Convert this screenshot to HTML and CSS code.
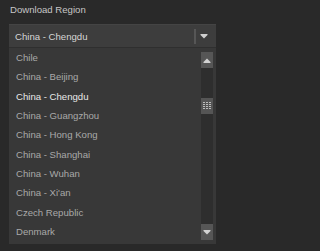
FILE: index.html
```html
<!DOCTYPE html>
<html>
<head>
<meta charset="utf-8">
<link rel="stylesheet" href="styles.css">
</head>
<body>
<div class="panel">
  <div class="label">Download Region</div>
  <div class="select">
    <span class="select-text">China - Chengdu</span>
    <span class="select-sep"></span>
    <svg class="select-arrow" width="8" height="5" viewBox="0 0 8 5"><rect x="0.5" y="0" width="7" height="1" fill="#cfcfcf"/><polygon points="0.5,1 7.5,1 4,4.5" fill="#cfcfcf"/></svg>
  </div>
  <div class="list">
    <div class="items">
      <div class="item">Chile</div>
      <div class="item">China - Beijing</div>
      <div class="item selected">China - Chengdu</div>
      <div class="item">China - Guangzhou</div>
      <div class="item">China - Hong Kong</div>
      <div class="item">China - Shanghai</div>
      <div class="item">China - Wuhan</div>
      <div class="item">China - Xi'an</div>
      <div class="item">Czech Republic</div>
      <div class="item">Denmark</div>
    </div>
    <div class="scrollbar">
      <div class="sb-btn">
        <svg width="8" height="5" viewBox="0 0 8 5"><polygon points="4,0.5 7.5,4 0.5,4" fill="#d2d2d2"/><rect x="0.5" y="4" width="7" height="1" fill="#d2d2d2"/></svg>
      </div>
      <div class="sb-track">
        <div class="sb-thumb">
          <svg width="8" height="8" viewBox="0 0 8 8">
            <g fill="#bdbdbd">
              <rect x="0" y="0" width="2" height="1"/><rect x="3" y="0" width="2" height="1"/><rect x="6" y="0" width="2" height="1"/>
              <rect x="0" y="2" width="2" height="1"/><rect x="3" y="2" width="2" height="1"/><rect x="6" y="2" width="2" height="1"/>
              <rect x="0" y="4" width="2" height="1"/><rect x="3" y="4" width="2" height="1"/><rect x="6" y="4" width="2" height="1"/>
              <rect x="0" y="6" width="2" height="1"/><rect x="3" y="6" width="2" height="1"/><rect x="6" y="6" width="2" height="1"/>
            </g>
          </svg>
        </div>
      </div>
      <div class="sb-btn">
        <svg width="8" height="5" viewBox="0 0 8 5"><rect x="0.5" y="0" width="7" height="1" fill="#d2d2d2"/><polygon points="0.5,1 7.5,1 4,4.5" fill="#d2d2d2"/></svg>
      </div>
    </div>
  </div>
</div>
</body>
</html>
```

FILE: styles.css
```css
html, body {
  margin: 0;
  padding: 0;
  background: #292929;
  font-family: "Liberation Sans", Arial, sans-serif;
  font-size: 9.6px;
}

.panel {
  padding: 0 1px 0 9px;
  width: 207px;
}

.label {
  height: 24px;
  line-height: 19px;
  padding-left: 1px;
  color: #c6c6c6;
}

.select {
  height: 23px;
  background: #3d3d3d;
  display: flex;
  align-items: center;
  padding-left: 6px;
  box-sizing: border-box;
  border-top: 1px solid #444444;
}

.select-text {
  flex: 1;
  color: #d6d6d6;
}

.select-sep {
  width: 2px;
  height: 15px;
  background: #565656;
  margin-right: 4px;
}

.select-arrow {
  display: block;
  margin-right: 8px;
}

.list {
  height: 197px;
  background: #383838;
  display: flex;
  border-top: 1px solid #2f2f2f;
  box-sizing: border-box;
}

.items {
  flex: 1;
  padding-left: 7px;
}

.item {
  height: 19.33px;
  line-height: 19.33px;
  color: #a9a9a9;
  white-space: nowrap;
}

.item.selected {
  color: #e8e8e8;
}

.scrollbar {
  width: 12px;
  margin: 4px 3px 4px 0;
  display: flex;
  flex-direction: column;
}

.sb-btn {
  height: 16px;
  background: #565656;
  display: flex;
  align-items: center;
  justify-content: center;
}

.sb-btn svg {
  display: block;
}

.sb-track {
  flex: 1;
  background: #2e2e2e;
}

.sb-thumb {
  margin-top: 30px;
  height: 16px;
  background: #555555;
  display: flex;
  align-items: center;
  justify-content: center;
}

.sb-thumb svg {
  display: block;
}
```
